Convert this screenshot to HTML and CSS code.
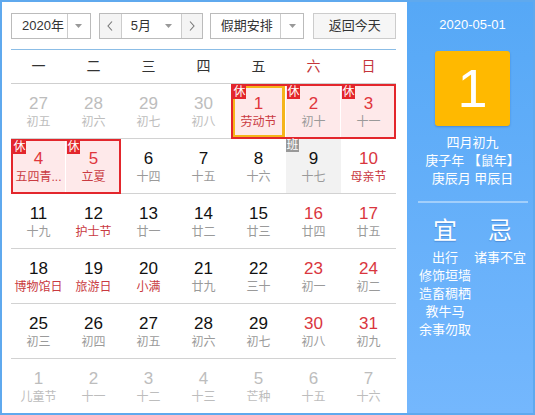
FILE: index.html
```html
<!DOCTYPE html>
<html lang="zh-CN">
<head>
<meta charset="utf-8">
<title>万年历</title>
<link rel="stylesheet" href="styles.css">
</head>
<body>
<div class="app">
  <div class="main">
    <div class="toolbar">
      <div class="select year">
        <span class="sel-text">2020年</span>
        <span class="sel-arrow"><svg width="7" height="4" viewBox="0 0 7 4"><polygon points="0,0 7,0 3.5,4" fill="#999"/></svg></span>
      </div>
      <div class="month-nav">
        <span class="nav-btn prev"><svg width="6" height="10" viewBox="0 0 6 10"><path d="M5 0.5 L1 5 L5 9.5" fill="none" stroke="#777" stroke-width="1.1"/></svg></span>
        <span class="month-text"><span>5月</span><svg class="mid-arrow" width="7" height="4" viewBox="0 0 7 4"><polygon points="0,0 7,0 3.5,4" fill="#999"/></svg></span>
        <span class="nav-btn next"><svg width="6" height="10" viewBox="0 0 6 10"><path d="M1 0.5 L5 5 L1 9.5" fill="none" stroke="#777" stroke-width="1.1"/></svg></span>
      </div>
      <div class="select holiday">
        <span class="sel-text">假期安排</span>
        <span class="sel-arrow"><svg width="7" height="4" viewBox="0 0 7 4"><polygon points="0,0 7,0 3.5,4" fill="#999"/></svg></span>
      </div>
      <div class="btn-today">返回今天</div>
    </div>
    <div class="weekdays">
      <span>一</span><span>二</span><span>三</span><span>四</span><span>五</span><span class="we">六</span><span class="we">日</span>
    </div>
    <div class="grid">
      <div class="cell other"><span class="num">27</span><span class="lun">初五</span></div>
      <div class="cell other"><span class="num">28</span><span class="lun">初六</span></div>
      <div class="cell other"><span class="num">29</span><span class="lun">初七</span></div>
      <div class="cell other"><span class="num">30</span><span class="lun">初八</span></div>
      <div class="cell hol s today fest"><span class="badge">休</span><span class="num">1</span><span class="lun">劳动节</span></div>
      <div class="cell hol"><span class="badge">休</span><span class="num">2</span><span class="lun">初十</span></div>
      <div class="cell hol e"><span class="badge">休</span><span class="num">3</span><span class="lun">十一</span></div>

      <div class="cell hol s fest"><span class="badge">休</span><span class="num">4</span><span class="lun">五四青...</span></div>
      <div class="cell hol e fest"><span class="badge">休</span><span class="num">5</span><span class="lun">立夏</span></div>
      <div class="cell"><span class="num">6</span><span class="lun">十四</span></div>
      <div class="cell"><span class="num">7</span><span class="lun">十五</span></div>
      <div class="cell"><span class="num">8</span><span class="lun">十六</span></div>
      <div class="cell work"><span class="badge gray">班</span><span class="num">9</span><span class="lun">十七</span></div>
      <div class="cell wk fest"><span class="num">10</span><span class="lun">母亲节</span></div>

      <div class="cell"><span class="num">11</span><span class="lun">十九</span></div>
      <div class="cell fest"><span class="num">12</span><span class="lun">护士节</span></div>
      <div class="cell"><span class="num">13</span><span class="lun">廿一</span></div>
      <div class="cell"><span class="num">14</span><span class="lun">廿二</span></div>
      <div class="cell"><span class="num">15</span><span class="lun">廿三</span></div>
      <div class="cell wk"><span class="num">16</span><span class="lun">廿四</span></div>
      <div class="cell wk"><span class="num">17</span><span class="lun">廿五</span></div>

      <div class="cell fest"><span class="num">18</span><span class="lun">博物馆日</span></div>
      <div class="cell fest"><span class="num">19</span><span class="lun">旅游日</span></div>
      <div class="cell fest"><span class="num">20</span><span class="lun">小满</span></div>
      <div class="cell"><span class="num">21</span><span class="lun">廿九</span></div>
      <div class="cell"><span class="num">22</span><span class="lun">三十</span></div>
      <div class="cell wk"><span class="num">23</span><span class="lun">初一</span></div>
      <div class="cell wk"><span class="num">24</span><span class="lun">初二</span></div>

      <div class="cell"><span class="num">25</span><span class="lun">初三</span></div>
      <div class="cell"><span class="num">26</span><span class="lun">初四</span></div>
      <div class="cell"><span class="num">27</span><span class="lun">初五</span></div>
      <div class="cell"><span class="num">28</span><span class="lun">初六</span></div>
      <div class="cell"><span class="num">29</span><span class="lun">初七</span></div>
      <div class="cell wk"><span class="num">30</span><span class="lun">初八</span></div>
      <div class="cell wk"><span class="num">31</span><span class="lun">初九</span></div>

      <div class="cell other"><span class="num">1</span><span class="lun">儿童节</span></div>
      <div class="cell other"><span class="num">2</span><span class="lun">十一</span></div>
      <div class="cell other"><span class="num">3</span><span class="lun">十二</span></div>
      <div class="cell other"><span class="num">4</span><span class="lun">十三</span></div>
      <div class="cell other"><span class="num">5</span><span class="lun">芒种</span></div>
      <div class="cell other"><span class="num">6</span><span class="lun">十五</span></div>
      <div class="cell other"><span class="num">7</span><span class="lun">十六</span></div>
    </div>
  </div>
  <div class="side">
    <div class="side-date">2020-05-01</div>
    <div class="day-box">1</div>
    <div class="lunar-info">
      <div>四月初九</div>
      <div>庚子年 【鼠年】</div>
      <div>庚辰月 甲辰日</div>
    </div>
    <div class="side-sep"></div>
    <div class="yiji">
      <div class="yj-col">
        <div class="yj-title">宜</div>
        <div class="yj-item">出行</div>
        <div class="yj-item">修饰垣墙</div>
        <div class="yj-item">造畜稠栖</div>
        <div class="yj-item">教牛马</div>
        <div class="yj-item">余事勿取</div>
      </div>
      <div class="yj-col">
        <div class="yj-title">忌</div>
        <div class="yj-item">诸事不宜</div>
      </div>
    </div>
  </div>
</div>
</body>
</html>
```

FILE: styles.css
```css
html, body {
  margin: 0;
  padding: 0;
}
body {
  font-family: "Liberation Sans", "Noto Sans CJK SC", sans-serif;
  color: #333;
}
.app {
  display: flex;
  width: 535px;
  height: 415px;
  box-sizing: border-box;
  border: 2px solid #5fa9ee;
  overflow: hidden;
}
.main {
  width: 405px;
  flex: none;
  background: #fff;
  padding: 11px 11px 0 9px;
  box-sizing: border-box;
}
.toolbar {
  display: flex;
  height: 26px;
  margin-bottom: 10px;
  font-size: 13px;
  color: #333;
}
.select {
  display: flex;
  border: 1px solid #bbb;
  box-sizing: border-box;
  background: #fff;
}
.select.year { width: 80px; }
.select.holiday { width: 95px; margin-left: 7px; }
.sel-text {
  flex: 1;
  padding-left: 10px;
  line-height: 24px;
  white-space: nowrap;
}
.sel-arrow {
  width: 23px;
  box-sizing: border-box;
  border-left: 1px solid #ccc;
  display: flex;
  align-items: center;
  justify-content: center;
}
.month-nav {
  display: flex;
  width: 104px;
  margin-left: 8px;
  border: 1px solid #bbb;
  box-sizing: border-box;
}
.nav-btn {
  display: flex;
  align-items: center;
  justify-content: center;
  background: #f4f4f4;
}
.nav-btn.prev { width: 21px; }
.nav-btn.next { width: 20px; }
.month-text {
  width: 61px;
  box-sizing: border-box;
  border-left: 1px solid #ccc;
  border-right: 1px solid #ccc;
  display: flex;
  align-items: center;
  padding: 0 9px 0 9px;
  line-height: 24px;
}
.mid-arrow { margin-left: auto; }
.btn-today {
  width: 83px;
  margin-left: 9px;
  box-sizing: border-box;
  border: 1px solid #ccc;
  background: #f6f6f6;
  text-align: center;
  line-height: 24px;
}
.weekdays {
  display: grid;
  grid-template-columns: repeat(7, 55px);
  height: 33px;
  border-top: 1px solid #8bbde6;
  border-bottom: 1px solid #cfcfcf;
  font-size: 14px;
  line-height: 33px;
  text-align: center;
  color: #333;
}
.weekdays .we { color: #c4343a; }
.grid {
  display: grid;
  grid-template-columns: repeat(7, 55px);
  grid-auto-rows: 55px;
}
.cell {
  position: relative;
  box-sizing: border-box;
  border-bottom: 1px solid #d2d2d2;
  padding-top: 10px;
  text-align: center;
}
.num {
  display: block;
  font-size: 17px;
  line-height: 20px;
  color: #111;
}
.lun {
  display: block;
  font-size: 12px;
  line-height: 16px;
  color: #9a9a9a;
  white-space: nowrap;
}
.other .num, .other .lun { color: #bdbdbd; }
.wk .num { color: #d9363e; }
.fest .lun { color: #c93a41; }
.work { background: #f2f2f2; }
.hol {
  background: #fee9ea;
  border-bottom-width: 0;
  box-shadow: inset 0 2px #e3262c, inset 0 -2px #e3262c, inset -1px 0 #fff;
}
.hol.s {
  box-shadow: inset 0 2px #e3262c, inset 0 -2px #e3262c, inset 2px 0 #e3262c, inset -1px 0 #fff;
}
.hol.e {
  box-shadow: inset 0 2px #e3262c, inset 0 -2px #e3262c, inset -2px 0 #e3262c;
}
.hol.s.today {
  box-shadow: inset 0 2px #e3262c, inset 0 -2px #e3262c, inset 2px 0 #e3262c, inset -1px 0 #fff, inset 0 0 0 4px #f5b51b;
}
.hol .num { color: #e0363c; }
.badge {
  position: absolute;
  top: 2px;
  left: 1px;
  width: 13px;
  height: 13px;
  font-size: 12px;
  line-height: 13px;
  text-align: center;
  color: #fff;
  background: #e3262c;
}
.hol.s .badge { left: 2px; }
.badge.gray {
  top: 0;
  left: 0;
  background: #999;
}
.side {
  flex: 1;
  padding: 13px 0 0 5px;
  background: linear-gradient(to bottom, #56a8f6, #74b7fd);
  color: #fff;
  text-align: center;
}
.side-date {
  font-size: 13px;
  line-height: 20px;
}
.day-box {
  width: 75px;
  height: 75px;
  margin: 16px auto 0;
  background: #ffb900;
  border-radius: 3px;
  box-shadow: 0 1px 2px rgba(0, 40, 120, 0.25);
  font-size: 54px;
  line-height: 75px;
  color: #fff;
}
.lunar-info {
  margin-top: 8px;
  font-size: 13px;
  line-height: 18px;
}
.side-sep {
  width: 110px;
  height: 2px;
  margin: 13px auto 0;
  background: rgba(255, 255, 255, 0.4);
}
.yiji {
  display: flex;
  justify-content: center;
  margin-top: 13px;
}
.yj-col {
  width: 55px;
}
.yj-title {
  font-size: 24px;
  line-height: 30px;
  margin-bottom: 3px;
  text-shadow: 0 1px 1px rgba(0, 40, 120, 0.25);
}
.yj-item {
  font-size: 13px;
  line-height: 18px;
  white-space: nowrap;
}
```
